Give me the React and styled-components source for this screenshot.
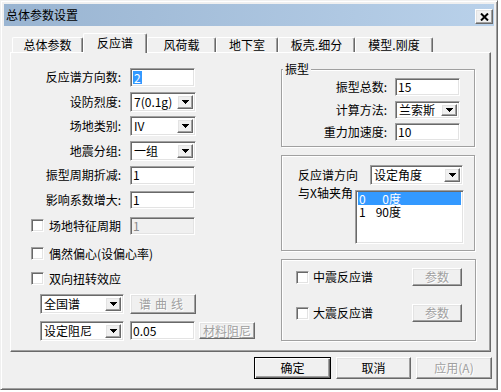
import React from 'react';
import styled, { createGlobalStyle, css } from 'styled-components';

const Global = createGlobalStyle`
  html, body { margin: 0; padding: 0; background: #fff; }
  body {
    font-family: "Noto Sans CJK SC", "Noto Sans", sans-serif;
    font-size: 12px;
    color: #000;
  }
  * { box-sizing: border-box; }
`;

const sunken = css`
  background: #fff;
  border: 1px solid;
  border-color: #a0a0a0 #fff #fff #a0a0a0;
  box-shadow: inset 1px 1px #696969, inset -1px -1px #e3e3e3;
`;

const raised = css`
  background: #f0f0f0;
  border: 1px solid;
  border-color: #fff #696969 #696969 #fff;
  box-shadow: inset -1px -1px #a0a0a0, inset 1px 1px #e3e3e3;
`;

const Window = styled.div`
  width: 498px;
  height: 390px;
  background: #f0f0f0;
  border: 1px solid;
  border-color: #f0f0f0 #696969 #696969 #f0f0f0;
  box-shadow: inset 1px 1px #fff, inset -1px -1px #a0a0a0;
  padding: 3px;
  display: flex;
  flex-direction: column;
`;

const TitleBar = styled.div`
  height: 22px;
  background: linear-gradient(to right, #99b4d1, #b9d1ea);
  display: flex;
  align-items: center;
  justify-content: space-between;
  padding: 0 1px 0 2px;
`;

const TitleText = styled.span`
  line-height: 14px;
`;

const CloseButton = styled.div`
  ${raised};
  width: 18px;
  height: 15px;
  margin-top: 3px;
  display: flex;
  align-items: center;
  justify-content: center;
`;

const TabRow = styled.div`
  display: flex;
  align-items: flex-end;
  height: 19px;
  margin-top: 7px;
  padding-left: 8px;
`;

const Tab = styled.div`
  width: ${p => p.$w}px;
  height: ${p => (p.$active ? 20 : 15)}px;
  margin-bottom: ${p => (p.$active ? -1 : 0)}px;
  position: relative;
  z-index: ${p => (p.$active ? 2 : 1)};
  background: #f0f0f0;
  border-top: 1px solid #fff;
  border-left: 1px solid #fff;
  border-right: 1px solid #696969;
  box-shadow: inset -1px 0 #a0a0a0;
  border-radius: 2px 2px 0 0;
  display: flex;
  align-items: center;
  justify-content: center;
  line-height: 12px;
  padding-bottom: ${p => (p.$active ? 1 : 0)}px;
  white-space: nowrap;
`;

const Panel = styled.div`
  margin-left: 6px;
  width: 481px;
  height: 300px;
  border: 1px solid;
  border-color: #fff #696969 #696969 #fff;
  box-shadow: inset -1px -1px #a0a0a0;
  display: flex;
`;

const LeftCol = styled.div`
  width: 270px;
  padding: 14px 0 0 20px;
  display: flex;
  flex-direction: column;
`;

const FormStack = styled.div`
  display: flex;
  flex-direction: column;
  gap: ${p => p.$gap}px;
`;

const Row = styled.div`
  display: flex;
  align-items: center;
  height: ${p => p.$h || 20}px;
  margin-top: ${p => p.$mt || 0}px;
`;

const Label = styled.span`
  width: ${p => p.$w}px;
  flex: none;
  text-align: ${p => p.$align || 'right'};
  white-space: nowrap;
  line-height: 14px;
  margin-left: ${p => p.$ml || 0}px;
  align-self: ${p => (p.$top ? 'flex-start' : 'center')};
  margin-top: ${p => (p.$top ? -4 : 0)}px;
`;

const TextBox = styled.div`
  ${sunken};
  width: ${p => p.$w}px;
  height: ${p => p.$h}px;
  margin-left: ${p => p.$ml || 0}px;
  padding-left: 2px;
  display: flex;
  align-items: center;
  line-height: 14px;
  white-space: nowrap;
  flex: none;
  ${p => p.$disabled && css`
    background: #f0f0f0;
    color: #8a8a8a;
  `}
`;

const Selected = styled.span`
  background: #3399ff;
  color: #fff;
  padding: 0 1px;
  line-height: 13px;
`;

const SelectBox = styled.div`
  ${sunken};
  width: ${p => p.$w}px;
  height: ${p => p.$h}px;
  margin-left: ${p => p.$ml || 0}px;
  display: flex;
  align-items: stretch;
  flex: none;
  padding: 2px;
`;

const SelectValue = styled.div`
  flex: 1;
  min-width: 0;
  display: flex;
  align-items: center;
  line-height: 14px;
  white-space: nowrap;
  padding-left: 1px;
`;

const DropButton = styled.div`
  ${raised};
  width: 16px;
  flex: none;
  display: flex;
  align-items: center;
  justify-content: center;
`;

const CheckBox = styled.div`
  ${sunken};
  width: 13px;
  height: 13px;
  flex: none;
`;

const Button = styled.div`
  ${raised};
  width: ${p => p.$w}px;
  height: ${p => p.$h}px;
  margin-left: ${p => p.$ml || 0}px;
  display: flex;
  align-items: center;
  justify-content: center;
  line-height: 14px;
  white-space: nowrap;
  flex: none;
  letter-spacing: ${p => p.$ls || 0}px;
  ${p => p.$disabled && css`
    color: #a0a0a0;
    text-shadow: 1px 1px #fff;
  `}
  ${p => p.$default && css`
    border-color: #000;
    box-shadow: inset 1px 1px #fff, inset -1px -1px #696969, inset -2px -2px #a0a0a0;
  `}
`;

const RightCol = styled.div`
  width: 195px;
  padding-top: 16px;
  display: flex;
  flex-direction: column;
`;

const Group = styled.div`
  position: relative;
  width: ${p => p.$w}px;
  height: ${p => p.$h}px;
  margin-top: ${p => p.$mt || 0}px;
  border: 1px solid #a0a0a0;
  box-shadow: inset 1px 1px #fff, 1px 1px #fff;
  padding: ${p => p.$pad};
  display: flex;
  flex-direction: column;
  gap: ${p => p.$gap || 0}px;
`;

const Legend = styled.span`
  position: absolute;
  top: -8px;
  left: 1px;
  padding: 0 2px;
  background: #f0f0f0;
  line-height: 14px;
`;

const CheckLine = styled.div`
  display: flex;
  align-items: center;
  justify-content: space-between;
  height: 18px;
  margin-top: ${p => p.$mt || 0}px;
`;

const CheckPair = styled.div`
  display: flex;
  align-items: center;
  gap: ${p => p.$gap}px;
  line-height: 14px;
`;

const ListBox = styled.div`
  ${sunken};
  width: 109px;
  height: 54px;
  padding: 1px 2px;
  flex: none;
`;

const ListItem = styled.div`
  display: flex;
  align-items: center;
  height: 13px;
  line-height: 13px;
  padding-left: 1px;
  white-space: nowrap;
  ${p => p.$sel && css`
    background: #3399ff;
    color: #fff;
  `}
`;

const ItemIndex = styled.span`
  width: 14px;
`;

const ItemValue = styled.span`
  width: 28px;
  text-align: right;
`;

const ButtonRow = styled.div`
  display: flex;
  justify-content: flex-end;
  margin-top: 5px;
  padding-right: 2px;
`;

const Tri = () => (
  <svg width="7" height="4" viewBox="0 0 7 4" shapeRendering="crispEdges">
    <path d="M0 0H7V1H6V2H5V3H4V4H3V3H2V2H1V1H0Z" fill="#000" />
  </svg>
);

const CloseX = () => (
  <svg width="9" height="8" viewBox="0 0 9 8">
    <path d="M1 0.5L8 7.5M8 0.5L1 7.5" stroke="#000" strokeWidth="2" />
  </svg>
);

const Select = ({ w, h, ml, children }) => (
  <SelectBox $w={w} $h={h} $ml={ml}>
    <SelectValue>{children}</SelectValue>
    <DropButton><Tri /></DropButton>
  </SelectBox>
);

const tabs = [
  ['总体参数', 71],
  ['反应谱', 64, true],
  ['风荷载', 69],
  ['地下室', 62],
  ['板壳.细分', 77],
  ['模型.刚度', 78],
];

export default function App() {
  return (
    <>
      <Global />
      <Window>
        <TitleBar>
          <TitleText>总体参数设置</TitleText>
          <CloseButton><CloseX /></CloseButton>
        </TitleBar>

        <TabRow>
          {tabs.map(([t, w, a]) => (
            <Tab key={t} $w={w} $active={a}>{t}</Tab>
          ))}
        </TabRow>

        <Panel>
          <LeftCol>
            <FormStack $gap={4.5}>
              <Row>
                <Label $w={90}>反应谱方向数:</Label>
                <TextBox $w={65} $h={19} $ml={9}><Selected>2</Selected></TextBox>
              </Row>
              <Row>
                <Label $w={90}>设防烈度:</Label>
                <Select w={66} h={20} ml={9}>7(0.1g)</Select>
              </Row>
              <Row>
                <Label $w={90}>场地类别:</Label>
                <Select w={66} h={20} ml={9}>IV</Select>
              </Row>
              <Row>
                <Label $w={90}>地震分组:</Label>
                <Select w={66} h={20} ml={9}>一组</Select>
              </Row>
              <Row>
                <Label $w={90}>振型周期折减:</Label>
                <TextBox $w={65} $h={19} $ml={9}>1</TextBox>
              </Row>
              <Row>
                <Label $w={90}>影响系数增大:</Label>
                <TextBox $w={65} $h={18} $ml={9}>1</TextBox>
              </Row>
            </FormStack>

            <Row $mt={6}>
              <CheckBox />
              <Label $w={72} $ml={5} $align="left">场地特征周期</Label>
              <TextBox $w={65} $h={18} $ml={9} $disabled>1</TextBox>
            </Row>
            <Row $mt={8}>
              <CheckBox />
              <Label $w={150} $ml={5} $align="left">偶然偏心(设偏心率)</Label>
            </Row>
            <Row $mt={5}>
              <CheckBox />
              <Label $w={150} $ml={5} $align="left">双向扭转效应</Label>
            </Row>
            <Row $mt={5}>
              <Select w={84} h={20} ml={9}>全国谱</Select>
              <Button $w={66} $h={20} $ml={6} $disabled $ls={4}>谱曲线</Button>
            </Row>
            <Row $mt={7}>
              <Select w={84} h={20} ml={9}>设定阻尼</Select>
              <TextBox $w={65} $h={19} $ml={6}>0.05</TextBox>
              <Button $w={56} $h={17} $ml={4} $disabled>材料阻尼</Button>
            </Row>
          </LeftCol>

          <RightCol>
            <Group $w={194} $h={78} $pad="8px 0 0 0" $gap={4.5}>
              <Legend>振型</Legend>
              <Row $h={18}>
                <Label $w={105}>振型总数:</Label>
                <TextBox $w={65} $h={18} $ml={8}>15</TextBox>
              </Row>
              <Row $h={18}>
                <Label $w={105}>计算方法:</Label>
                <Select w={65} h={18} ml={8}>兰索斯</Select>
              </Row>
              <Row $h={18}>
                <Label $w={105}>重力加速度:</Label>
                <TextBox $w={65} $h={18} $ml={8}>10</TextBox>
              </Row>
            </Group>

            <Group $w={194} $h={96} $mt={8} $pad="9px 0 0 16px">
              <Row>
                <Label $w={72} $align="left">反应谱方向</Label>
                <Select w={93} h={20}>设定角度</Select>
              </Row>
              <Row $h={54} $mt={5}>
                <Label $w={57} $align="left" $top>与X轴夹角</Label>
                <ListBox>
                  <ListItem $sel><ItemIndex>0</ItemIndex><ItemValue>0度</ItemValue></ListItem>
                  <ListItem><ItemIndex>1</ItemIndex><ItemValue>90度</ItemValue></ListItem>
                </ListBox>
              </Row>
            </Group>

            <Group $w={195} $h={82} $mt={8} $pad="8px 13px 0 14px">
              <CheckLine>
                <CheckPair $gap={4}><CheckBox />中震反应谱</CheckPair>
                <Button $w={50} $h={18} $disabled>参数</Button>
              </CheckLine>
              <CheckLine $mt={18}>
                <CheckPair $gap={4}><CheckBox />大震反应谱</CheckPair>
                <Button $w={50} $h={18} $disabled>参数</Button>
              </CheckLine>
            </Group>
          </RightCol>
        </Panel>

        <ButtonRow>
          <Button $w={77} $h={22} $default>确定</Button>
          <Button $w={75} $h={22} $ml={5}>取消</Button>
          <Button $w={76} $h={22} $ml={5} $disabled>应用(A)</Button>
        </ButtonRow>
      </Window>
    </>
  );
}
